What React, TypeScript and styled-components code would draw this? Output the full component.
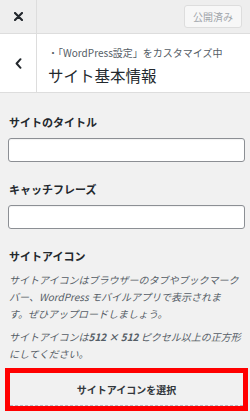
import React from 'react';
import styled, { createGlobalStyle } from 'styled-components';

const GlobalStyle = createGlobalStyle`
    html, body {
        margin: 0;
        padding: 0;
        background: #f1f1f1;
    }
    body {
        font-family: "Noto Sans CJK JP", "Liberation Sans", sans-serif;
        color: #23282d;
    }
`;

const Panel = styled.div`
    width: 250px;
    height: 420px;
    overflow: hidden;
    background: #f1f1f1;
`;

const TopBar = styled.div`
    display: flex;
    height: 33px;
    background: #eeeeee;
    border-bottom: 1px solid #dddddd;
`;

const IconCell = styled.div<{ $height: number }>`
    width: 36px;
    height: ${(p) => p.$height}px;
    flex: none;
    display: flex;
    align-items: center;
    justify-content: center;
    border-right: 1px solid #dddddd;
    color: #23282d;
`;

const TopActions = styled.div`
    flex: 1;
    display: flex;
    justify-content: flex-end;
    align-items: center;
    padding-right: 8px;
`;

const PublishButton = styled.button`
    width: 58px;
    height: 23px;
    padding: 0;
    border: 1px solid #dddddd;
    border-radius: 3px;
    background: #f7f7f7;
    color: #a0a5aa;
    font-family: inherit;
    font-size: 10px;
`;

const InfoHeader = styled.div`
    display: flex;
    background: #ffffff;
    border-bottom: 1px solid #dddddd;
`;

const InfoText = styled.div`
    padding: 11px 0 0 11px;
`;

const Breadcrumb = styled.div`
    font-size: 10px;
    line-height: 16px;
    color: #555d66;
`;

const SectionTitle = styled.div`
    font-size: 15.5px;
    line-height: 22px;
    color: #23282d;
    margin-top: 3px;
`;

const Content = styled.div`
    padding: 21px 5px 0 8px;
`;

const Field = styled.div`
    margin-bottom: 19px;
`;

const Label = styled.div`
    font-size: 11px;
    line-height: 16px;
    font-weight: 700;
    padding-left: 1px;
    margin-bottom: 8px;
`;

const TextInput = styled.input`
    display: block;
    box-sizing: border-box;
    width: 237px;
    height: 24px;
    margin: 0;
    border: 1px solid #8c8f94;
    border-radius: 3px;
    background: #ffffff;
    box-shadow: inset 0 1px 1px rgba(0, 0, 0, 0.05);
`;

const GroupTitle = styled(Label)`
    margin-top: 3px;
    margin-bottom: 7px;
`;

const Description = styled.p`
    margin: 0 0 6px;
    padding-left: 1px;
    font-size: 10px;
    line-height: 17px;
    font-style: italic;
    color: #555d66;
    white-space: nowrap;
`;

const Highlight = styled.div`
    margin: 5px -3px 0 -3px;
    border: 5px solid #ff0000;
`;

const SelectButton = styled.button`
    display: block;
    width: 100%;
    height: 33px;
    padding: 0;
    border: none;
    border-bottom: 1px dashed #b4b9be;
    background: #f1f1f1;
    color: #32373c;
    font-family: inherit;
    font-size: 10px;
    font-weight: 700;
`;

const CloseIcon = () => (
    <svg width="9" height="9" viewBox="0 0 9 9">
        <path d="M1 1 L8 8 M8 1 L1 8" stroke="#23282d" strokeWidth="2.2" strokeLinecap="round" />
    </svg>
);

const BackIcon = () => (
    <svg width="7" height="11" viewBox="0 0 7 11">
        <path d="M5.5 1.2 L1.6 5.5 L5.5 9.8" fill="none" stroke="#23282d" strokeWidth="2" strokeLinecap="round" strokeLinejoin="round" />
    </svg>
);

export default function App() {
    return (
        <Panel>
            <GlobalStyle />
            <TopBar>
                <IconCell $height={33}>
                    <CloseIcon />
                </IconCell>
                <TopActions>
                    <PublishButton disabled>公開済み</PublishButton>
                </TopActions>
            </TopBar>
            <InfoHeader>
                <IconCell $height={58}>
                    <BackIcon />
                </IconCell>
                <InfoText>
                    <Breadcrumb>・「WordPress設定」をカスタマイズ中</Breadcrumb>
                    <SectionTitle>サイト基本情報</SectionTitle>
                </InfoText>
            </InfoHeader>
            <Content>
                <Field>
                    <Label>サイトのタイトル</Label>
                    <TextInput type="text" />
                </Field>
                <Field>
                    <Label>キャッチフレーズ</Label>
                    <TextInput type="text" />
                </Field>
                <GroupTitle>サイトアイコン</GroupTitle>
                <Description>
                    サイトアイコンはブラウザーのタブやブックマーク
                    <br />
                    バー、WordPress モバイルアプリで表示されま
                    <br />
                    す。ぜひアップロードしましょう。
                </Description>
                <Description>
                    サイトアイコンは<strong>512 × 512</strong> ピクセル以上の正方形
                    <br />
                    にしてください。
                </Description>
                <Highlight>
                    <SelectButton type="button">サイトアイコンを選択</SelectButton>
                </Highlight>
            </Content>
        </Panel>
    );
}
